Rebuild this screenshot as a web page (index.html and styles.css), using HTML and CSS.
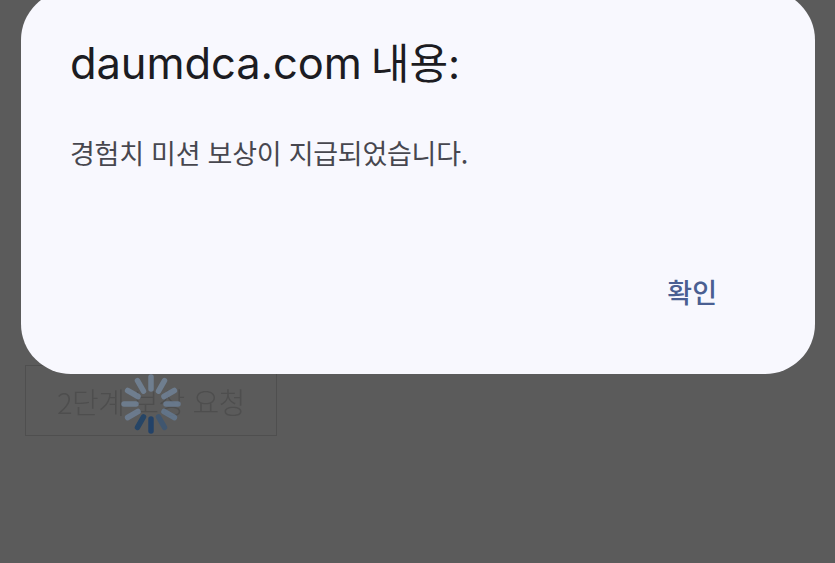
FILE: index.html
```html
<!DOCTYPE html>
<html lang="ko">
<head>
<meta charset="utf-8">
<title>daumdca.com 내용</title>
<link rel="stylesheet" href="styles.css">
</head>
<body>
<main class="page">
  <button class="reward-button" type="button">2단계 보상 요청</button>
  <svg class="spinner" viewBox="-32 -32 64 64" width="64" height="64" aria-hidden="true">
    <g stroke-width="5.5" stroke-linecap="round">
      <line x1="0" y1="15" x2="0" y2="27" stroke="#1c3f6a"/>
      <line x1="0" y1="15" x2="0" y2="27" stroke="#1f4268" transform="rotate(30)"/>
      <line x1="0" y1="15" x2="0" y2="27" stroke="#3d5672" transform="rotate(-30)"/>
      <line x1="0" y1="15" x2="0" y2="27" stroke="#64788f" transform="rotate(-60)"/>
      <line x1="0" y1="15" x2="0" y2="27" stroke="#6a7c92" transform="rotate(-90)"/>
      <line x1="0" y1="15" x2="0" y2="27" stroke="#6f8095" transform="rotate(-120)"/>
      <line x1="0" y1="15" x2="0" y2="27" stroke="#728397" transform="rotate(-150)"/>
      <line x1="0" y1="15" x2="0" y2="27" stroke="#728397" transform="rotate(180)"/>
      <line x1="0" y1="15" x2="0" y2="27" stroke="#728397" transform="rotate(150)"/>
      <line x1="0" y1="15" x2="0" y2="27" stroke="#728397" transform="rotate(120)"/>
      <line x1="0" y1="15" x2="0" y2="27" stroke="#708195" transform="rotate(90)"/>
      <line x1="0" y1="15" x2="0" y2="27" stroke="#6e7f94" transform="rotate(60)"/>
    </g>
  </svg>
</main>
<section class="dialog" role="alertdialog">
  <h1 class="dialog-title">daumdca.com <span class="dialog-title-suffix">내용:</span></h1>
  <p class="dialog-message">경험치 미션 보상이 지급되었습니다.</p>
  <div class="dialog-actions">
    <button class="dialog-confirm" type="button">확인</button>
  </div>
</section>
</body>
</html>
```
FILE: styles.css
```css
html, body {
  margin: 0;
  height: 100%;
  overflow: hidden;
  background: #5b5b5b;
  font-family: "Inter", "Noto Sans CJK KR", sans-serif;
}

.page {
  height: 563px;
  box-sizing: border-box;
  padding: 365px 0 0 25px;
}

.reward-button {
  display: block;
  width: 252px;
  height: 71px;
  margin: 0;
  padding: 0;
  box-sizing: border-box;
  border: 1px solid #4f4f4f;
  background: transparent;
  color: #4e4e4e;
  font-family: "Noto Sans CJK KR", sans-serif;
  font-size: 29px;
  font-weight: 300;
  letter-spacing: -0.4px;
  filter: blur(0.5px);
}

.spinner {
  position: absolute;
  left: 119px;
  top: 372px;
  opacity: 0.88;
  filter: blur(0.5px);
}

.dialog {
  position: absolute;
  left: 21px;
  top: -10px;
  width: 794px;
  height: 384px;
  box-sizing: border-box;
  padding: 48px 49px 0;
  display: flex;
  flex-direction: column;
  background: #f8f8fe;
  border-radius: 50px;
}

.dialog-title {
  margin: 0;
  font-size: 43.5px;
  line-height: 50px;
  font-weight: 400;
  letter-spacing: -0.1px;
  word-spacing: -3px;
  color: #1c1c22;
}

.dialog-title-suffix {
  font-size: 42px;
}

.dialog-message {
  margin: 44px 0 0;
  font-size: 27px;
  line-height: 40px;
  font-weight: 400;
  letter-spacing: -0.25px;
  color: #47474f;
  font-family: "Noto Sans CJK KR", sans-serif;
}

.dialog-actions {
  display: flex;
  justify-content: flex-end;
  margin-top: 99px;
  padding-right: 49px;
}

.dialog-confirm {
  padding: 0;
  border: 0;
  background: none;
  font-family: "Noto Sans CJK KR", sans-serif;
  font-size: 27px;
  line-height: 40px;
  font-weight: 500;
  color: #4a5f92;
}
```
